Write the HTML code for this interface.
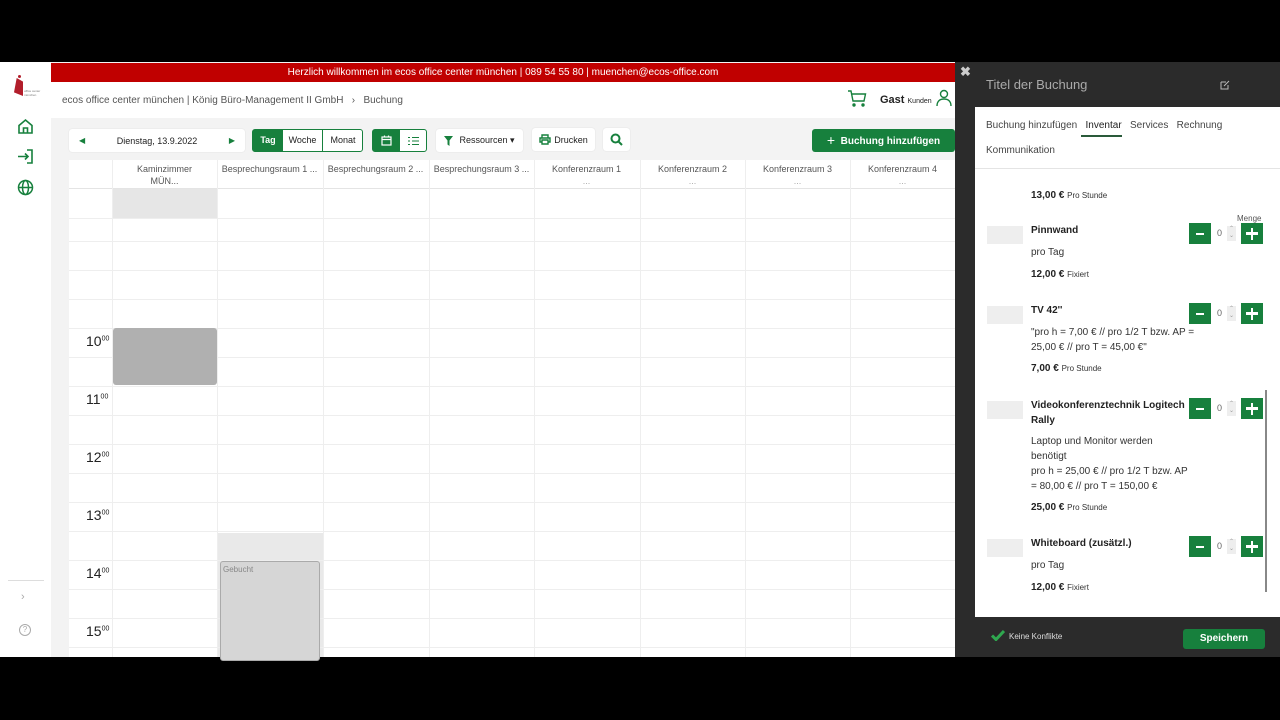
<!DOCTYPE html><html><head><meta charset="utf-8"><style>
*{box-sizing:border-box;margin:0;padding:0}
body{width:1280px;height:720px;background:#000;position:relative;overflow:hidden;font-family:"Liberation Sans",sans-serif;color:#333}
.a{position:absolute}
.g{background:#17803d;color:#fff}
.btn{position:absolute;background:#fff;border-radius:3px;font-size:10px;display:flex;align-items:center;justify-content:center;color:#222;box-shadow:0 0 1px #ccc}
.col{position:absolute;top:160px;height:497px;border-left:1px solid #eee}
.hl{position:absolute;left:69px;width:886px;height:1px;background:#eee}
.hr{position:absolute;left:86px;font-size:14px;color:#222}
.hr sup{font-size:7px}
.ch{position:absolute;top:163px;width:105px;text-align:center;font-size:9px;color:#555;line-height:12px}
.item{position:absolute;left:1031px;font-size:10px;color:#333;line-height:15px}
.item b{font-size:10px;color:#222}
.ph{position:absolute;left:987px;width:36px;height:18px;background:#eee}
.qty{position:absolute;left:1189px;width:74px;height:21px;background:#fff}
.qty .m,.qty .p{position:absolute;top:0;width:22px;height:21px;background:#17803d}
.qty .m{left:0}.qty .p{right:0}
.qty .m::after{content:"";position:absolute;left:7px;top:10px;width:8px;height:2px;background:#fff}
.qty .p::before{content:"";position:absolute;left:5px;top:9px;width:12px;height:2.5px;background:#fff}
.qty .p::after{content:"";position:absolute;left:9.75px;top:4.5px;width:2.5px;height:12px;background:#fff}
.qty span{position:absolute;left:28px;top:5px;font-size:9px;color:#666}
.qty i{position:absolute;left:38px;top:3px;width:9px;height:15px;background:#eee;font-style:normal;font-size:6px;color:#999;text-align:center;line-height:7px}
</style></head><body>
<!-- sidebar -->
<div class="a" style="left:0;top:62px;width:51px;height:595px;background:#fff"></div>
<div class="a" style="left:14px;top:78px;width:9px;height:18px;background:#b21e2b;clip-path:polygon(30% 0,100% 20%,100% 100%,0 80%)"></div>
<div class="a" style="left:18px;top:75px;width:3px;height:3px;background:#b21e2b;border-radius:50%"></div>
<div class="a" style="left:24px;top:89px;font-size:3px;color:#777;line-height:4px">office center<br>münchen</div>
<svg class="a" style="left:17px;top:118px" width="17" height="17" viewBox="0 0 17 17" fill="none" stroke="#17803d" stroke-width="1.6"><path d="M2 7.5L8.5 2L15 7.5V15H2Z"/><path d="M6.5 15V10H10.5V15"/></svg>
<svg class="a" style="left:17px;top:148px" width="17" height="17" viewBox="0 0 17 17" fill="none" stroke="#17803d" stroke-width="1.6"><path d="M1 8.5H11M8 5.5L11 8.5L8 11.5M10 2H15V15H10"/></svg>
<svg class="a" style="left:17px;top:179px" width="17" height="17" viewBox="0 0 17 17" fill="none" stroke="#17803d" stroke-width="1.5"><circle cx="8.5" cy="8.5" r="7"/><ellipse cx="8.5" cy="8.5" rx="3" ry="7"/><path d="M1.5 8.5H15.5"/></svg>
<div class="a" style="left:8px;top:580px;width:36px;height:1px;background:#ddd"></div>
<div class="a" style="left:21px;top:591px;font-size:11px;color:#aaa">›</div>
<div class="a" style="left:19px;top:624px;width:12px;height:12px;border:1px solid #aaa;border-radius:50%;font-size:8px;color:#aaa;text-align:center;line-height:10px">?</div>
<!-- main -->
<div class="a" style="left:51px;top:62px;width:904px;height:595px;background:#f3f3f3"></div>
<div class="a" style="left:51px;top:63px;width:904px;height:19px;background:#c00000;color:#fff;font-size:10px;text-align:center;line-height:20px">Herzlich willkommen im ecos office center münchen | 089 54 55 80 | muenchen@ecos-office.com</div>
<div class="a" style="left:51px;top:82px;width:904px;height:36px;background:#fff"></div>
<div class="a" style="left:62px;top:95px;font-size:10px;color:#555">ecos office center münchen | König Büro-Management II GmbH &nbsp;&nbsp;›&nbsp;&nbsp; Buchung</div>
<svg class="a" style="left:847px;top:89px" width="20" height="18" viewBox="0 0 20 18" fill="none" stroke="#17803d" stroke-width="1.4"><path d="M1 2H4L6 12H17L18.5 5H5"/><circle cx="7" cy="16" r="1" fill="#17803d"/><circle cx="16" cy="16" r="1" fill="#17803d"/></svg>
<div class="a" style="left:880px;top:94px;font-size:11px;font-weight:bold;color:#222">Gast <span style="font-size:7px;font-weight:normal">Kunden</span></div>
<svg class="a" style="left:935px;top:89px" width="18" height="18" viewBox="0 0 18 18" fill="none" stroke="#17803d" stroke-width="1.4"><circle cx="9" cy="5" r="3.5"/><path d="M2 17C2 12 5 10 9 10S16 12 16 17"/></svg>
<!-- toolbar -->
<div class="btn" style="left:69px;top:129px;width:176px;height:23px;justify-content:space-between;padding:0 10px"><span style="color:#17803d;font-size:8px">◀</span><span style="font-size:9px">Dienstag, 13.9.2022</span><span style="color:#17803d;font-size:8px">▶</span></div>
<div class="a" style="left:252px;top:129px;width:111px;height:23px;border:1px solid #17803d;border-radius:3px;background:#fff;font-size:9px"><div class="a g" style="left:0;top:0;width:30px;height:21px;text-align:center;line-height:21px;font-weight:bold">Tag</div><div class="a" style="left:30px;top:0;width:40px;height:21px;text-align:center;line-height:21px;border-right:1px solid #17803d;color:#222">Woche</div><div class="a" style="left:70px;width:40px;height:21px;text-align:center;line-height:21px;color:#222">Monat</div></div>
<div class="a" style="left:372px;top:129px;width:55px;height:23px;border:1px solid #17803d;border-radius:3px;background:#fff"><div class="a g" style="left:0;top:0;width:27px;height:21px"><svg class="a" style="left:8px;top:5px" width="11" height="11" viewBox="0 0 11 11" fill="none" stroke="#fff" stroke-width="1.2"><rect x="1" y="2" width="9" height="8"/><path d="M1 4.5H10M3.5 0.5V2.5M7.5 0.5V2.5"/></svg></div><svg class="a" style="left:35px;top:6px" width="11" height="10" viewBox="0 0 11 10" stroke="#17803d" stroke-width="1"><path d="M0 1.5H2M4 1.5H11M0 5H2M4 5H11M0 8.5H2M4 8.5H11"/></svg></div>
<div class="btn" style="left:436px;top:129px;width:87px;height:23px;font-size:9px"><svg width="9" height="10" viewBox="0 0 9 10" style="margin-right:6px"><path d="M0 0H9L5.5 4.5V10L3.5 8.5V4.5Z" fill="#17803d"/></svg>Ressourcen ▾</div>
<div class="btn" style="left:532px;top:128px;width:63px;height:23px;font-size:9px"><svg width="12" height="11" viewBox="0 0 12 11" style="margin-right:3px" fill="none" stroke="#17803d" stroke-width="1.4"><path d="M3 4V1H9V4M3 8H1V4H11V8H9M3 6H9V10H3Z"/></svg>Drucken</div>
<div class="btn" style="left:603px;top:128px;width:27px;height:23px"><svg width="13" height="13" viewBox="0 0 13 13" fill="none" stroke="#17803d" stroke-width="2"><circle cx="5.5" cy="5.5" r="4"/><path d="M8.5 8.5L12 12"/></svg></div>
<div class="a g" style="left:812px;top:129px;width:143px;height:23px;border-radius:3px;font-size:10px;font-weight:bold;text-align:center;line-height:23px"><span style="font-size:14px;font-weight:normal;vertical-align:-1px">+</span>&nbsp; Buchung hinzufügen</div>
<!-- grid -->
<div class="a" style="left:69px;top:160px;width:886px;height:497px;background:#fff"></div>
<div class="a" style="left:113px;top:189px;width:104px;height:29px;background:#e6e6e6"></div>
<div class="a" style="left:218px;top:533px;width:105px;height:124px;background:#e9e9e9"></div>
<div class="hl" style="top:188px;background:#e4e4e4"></div>
<div class="hl" style="top:218px"></div><div class="hl" style="top:241px"></div><div class="hl" style="top:270px"></div><div class="hl" style="top:299px"></div><div class="hl" style="top:328px"></div><div class="hl" style="top:357px"></div><div class="hl" style="top:386px"></div><div class="hl" style="top:415px"></div><div class="hl" style="top:444px"></div><div class="hl" style="top:473px"></div><div class="hl" style="top:502px"></div><div class="hl" style="top:531px"></div><div class="hl" style="top:560px"></div><div class="hl" style="top:589px"></div><div class="hl" style="top:618px"></div><div class="hl" style="top:647px"></div>
<div class="col" style="left:112px"></div><div class="col" style="left:217px"></div><div class="col" style="left:323px"></div><div class="col" style="left:429px"></div><div class="col" style="left:534px"></div><div class="col" style="left:640px"></div><div class="col" style="left:745px"></div><div class="col" style="left:850px"></div>
<div class="ch" style="left:112px">Kaminzimmer<br>MÜN...</div>
<div class="ch" style="left:217px">Besprechungsraum 1 ...</div>
<div class="ch" style="left:323px">Besprechungsraum 2 ...</div>
<div class="ch" style="left:429px">Besprechungsraum 3 ...</div>
<div class="ch" style="left:534px">Konferenzraum 1<br><span style="color:#aaa">...</span></div>
<div class="ch" style="left:640px">Konferenzraum 2<br><span style="color:#aaa">...</span></div>
<div class="ch" style="left:745px">Konferenzraum 3<br><span style="color:#aaa">...</span></div>
<div class="ch" style="left:850px">Konferenzraum 4<br><span style="color:#aaa">...</span></div>
<div class="a" style="left:113px;top:328px;width:104px;height:57px;background:#b0b0b0;border-radius:3px"></div>
<div class="a" style="left:220px;top:561px;width:100px;height:100px;background:#d6d6d6;border:1px solid #aaa;border-radius:3px;font-size:8px;color:#888;padding:3px 2px">Gebucht</div>
<div class="hr" style="top:333px">10<sup>00</sup></div>
<div class="hr" style="top:391px">11<sup>00</sup></div>
<div class="hr" style="top:449px">12<sup>00</sup></div>
<div class="hr" style="top:507px">13<sup>00</sup></div>
<div class="hr" style="top:565px">14<sup>00</sup></div>
<div class="hr" style="top:623px">15<sup>00</sup></div>
<!-- panel -->
<div class="a" style="left:955px;top:62px;width:325px;height:595px;background:#2b2b2b"></div>
<div class="a" style="left:960px;top:64px;font-size:13px;color:#ccc;font-weight:bold">✖</div>
<div class="a" style="left:986px;top:77px;font-size:13px;color:#aaa">Titel der Buchung</div>
<svg class="a" style="left:1220px;top:80px" width="10" height="10" viewBox="0 0 10 10" fill="none" stroke="#bbb" stroke-width="1"><path d="M1 2H6M1 2V9H8V5M4 6L9 1"/></svg>
<div class="a" style="left:975px;top:107px;width:305px;height:510px;background:#fff"></div>
<div class="a" style="left:986px;top:120px;font-size:10px;color:#444;word-spacing:0">Buchung hinzufügen&nbsp;&nbsp; <span style="color:#222">Inventar</span>&nbsp;&nbsp; Services&nbsp;&nbsp; Rechnung</div>
<div class="a" style="left:1081px;top:135px;width:41px;height:2px;background:#2a5a3a"></div>
<div class="a" style="left:986px;top:145px;font-size:10px;color:#444">Kommunikation</div>
<div class="a" style="left:975px;top:168px;width:305px;height:1px;background:#e4e4e4"></div>
<div class="a" style="left:1265px;top:390px;width:2px;height:202px;background:#888"></div>
<div class="item" style="top:188px"><b>13,00 €</b> <span style="font-size:8px">Pro Stunde</span></div>
<div class="a" style="left:1237px;top:214px;font-size:8px;color:#555">Menge</div>
<div class="ph" style="top:226px"></div>
<div class="item" style="top:223px"><b>Pinnwand</b></div>
<div class="item" style="top:245px">pro Tag</div>
<div class="item" style="top:267px"><b>12,00 €</b> <span style="font-size:8px">Fixiert</span></div>
<div class="qty" style="top:223px"><div class="m"></div><span>0</span><i>⌃<br>⌄</i><div class="p"></div></div>
<div class="ph" style="top:306px"></div>
<div class="item" style="top:303px"><b>TV 42''</b></div>
<div class="item" style="top:325px">"pro h = 7,00 € // pro 1/2 T bzw. AP =<br>25,00 € // pro T = 45,00 €"</div>
<div class="item" style="top:361px"><b>7,00 €</b> <span style="font-size:8px">Pro Stunde</span></div>
<div class="qty" style="top:303px"><div class="m"></div><span>0</span><i>⌃<br>⌄</i><div class="p"></div></div>
<div class="ph" style="top:401px"></div>
<div class="item" style="top:398px"><b>Videokonferenztechnik Logitech<br>Rally</b></div>
<div class="item" style="top:434px">Laptop und Monitor werden<br>benötigt<br>pro h = 25,00 € // pro 1/2 T bzw. AP<br>= 80,00 € // pro T = 150,00 €</div>
<div class="item" style="top:500px"><b>25,00 €</b> <span style="font-size:8px">Pro Stunde</span></div>
<div class="qty" style="top:398px"><div class="m"></div><span>0</span><i>⌃<br>⌄</i><div class="p"></div></div>
<div class="ph" style="top:539px"></div>
<div class="item" style="top:536px"><b>Whiteboard (zusätzl.)</b></div>
<div class="item" style="top:558px">pro Tag</div>
<div class="item" style="top:580px"><b>12,00 €</b> <span style="font-size:8px">Fixiert</span></div>
<div class="qty" style="top:536px"><div class="m"></div><span>0</span><i>⌃<br>⌄</i><div class="p"></div></div>
<svg class="a" style="left:991px;top:630px" width="14" height="11" viewBox="0 0 14 11"><path d="M1 5.5L5 9.5L13 1" fill="none" stroke="#2fa84f" stroke-width="3"/></svg>
<div class="a" style="left:1009px;top:632px;font-size:8px;color:#ddd">Keine Konflikte</div>
<div class="a g" style="left:1183px;top:629px;width:82px;height:20px;border-radius:3px;font-size:10px;font-weight:bold;text-align:center;line-height:20px">Speichern</div>
</body></html>
